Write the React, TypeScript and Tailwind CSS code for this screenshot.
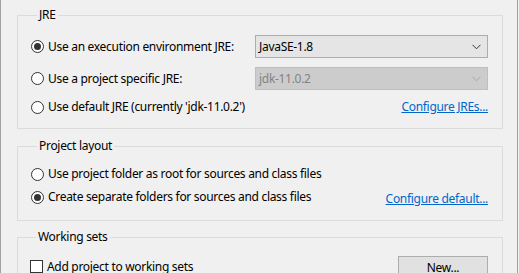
import React from "react";

const font = { fontFamily: '"Noto Sans", "Segoe UI", sans-serif' };

function Radio({ checked }: { checked?: boolean }) {
  return (
    <span className="w-[13px] h-[13px] rounded-full border border-[#333333] bg-white flex items-center justify-center shrink-0">
      {checked && <span className="w-[7px] h-[7px] rounded-full bg-[#333333]" />}
    </span>
  );
}

function Chevron({ color }: { color: string }) {
  return (
    <svg width="9" height="6" viewBox="0 0 9 6" className="shrink-0">
      <path d="M0.5 0.8 L4.5 4.8 L8.5 0.8" fill="none" stroke={color} strokeWidth="1" />
    </svg>
  );
}

export default function App() {
  return (
    <div
      className="w-[519px] h-[273px] overflow-hidden bg-[#f0f0f0] text-[12px] leading-[16px] tracking-[-0.3px] text-black"
      style={font}
    >
      <div className="w-[518px] h-[273px] border-l border-r border-[#a0a0a0] pt-[7px] pl-[16px]">
        {/* JRE */}
        <fieldset className="w-[486px] border border-[#dcdcdc] pl-[13px] pr-[14px] pt-[12px] pb-[10px]">
          <legend className="ml-[6px] px-[2px]">JRE</legend>
          <div className="flex flex-col">
            <div className="h-[23px] flex items-center">
              <Radio checked />
              <span className="ml-[4px]">Use an execution environment JRE:</span>
              <div className="ml-auto w-[233px] h-[23px] bg-[#e5e5e5] border border-[#adadad] flex items-center pl-[3px] pr-[6px]">
                <span className="flex-1">JavaSE-1.8</span>
                <Chevron color="#333333" />
              </div>
            </div>
            <div className="h-[23px] mt-[9px] flex items-center">
              <Radio />
              <span className="ml-[4px]">Use a project specific JRE:</span>
              <div className="ml-auto w-[233px] h-[23px] bg-[#cccccc] border border-[#bfbfbf] flex items-center pl-[3px] pr-[6px] text-[#838383]">
                <span className="flex-1">jdk-11.0.2</span>
                <Chevron color="#a6a6a6" />
              </div>
            </div>
            <div className="h-[22px] mt-[6px] flex items-center">
              <Radio />
              <span className="ml-[4px]">Use default JRE (currently 'jdk-11.0.2')</span>
              <span className="ml-auto text-[#0066cc] underline">Configure JREs...</span>
            </div>
          </div>
        </fieldset>

        {/* Project layout */}
        <fieldset className="mt-[9px] w-[486px] border border-[#dcdcdc] pl-[13px] pr-[14px] pt-[11px] pb-[12px]">
          <legend className="ml-[6px] px-[2px]">Project layout</legend>
          <div className="flex flex-col">
            <div className="h-[18px] flex items-center">
              <Radio />
              <span className="ml-[4px]">Use project folder as root for sources and class files</span>
            </div>
            <div className="h-[22px] mt-[3px] flex items-center">
              <Radio checked />
              <span className="ml-[4px]">Create separate folders for sources and class files</span>
              <span className="ml-auto mt-[4px] text-[#0066cc] underline">Configure default...</span>
            </div>
          </div>
        </fieldset>

        {/* Working sets */}
        <fieldset className="mt-[8px] w-[486px] border border-[#dcdcdc] pl-[12px] pr-[14px] pt-[11px] pb-[11px]">
          <legend className="ml-[6px] px-[2px]">Working sets</legend>
          <div className="h-[23px] flex items-start">
            <span className="w-[13px] h-[13px] border border-[#333333] bg-white shrink-0 mt-[4px]" />
            <span className="ml-[4px] mt-[3px]">Add project to working sets</span>
            <div className="ml-auto w-[90px] h-[23px] bg-[#e1e1e1] border border-[#adadad] flex items-center justify-center">
              New...
            </div>
          </div>
        </fieldset>
      </div>
    </div>
  );
}
